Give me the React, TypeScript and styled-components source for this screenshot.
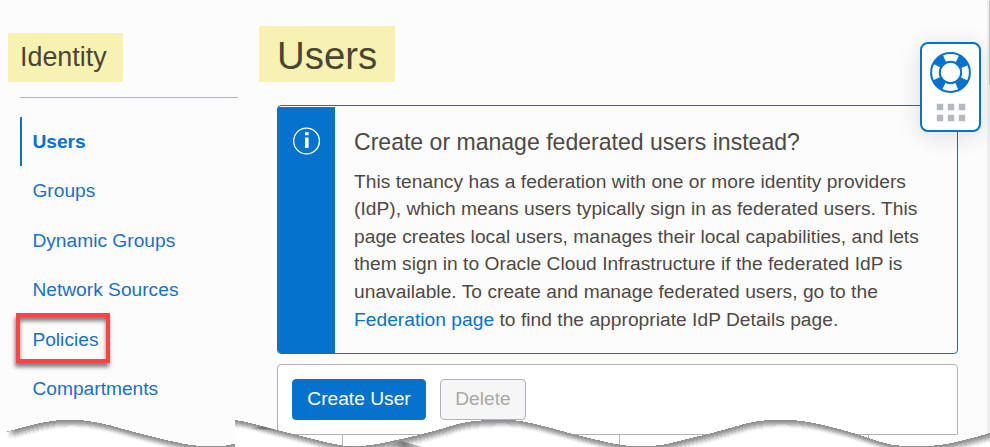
import React from "react";
import styled, { createGlobalStyle, css } from "styled-components";

const BLUE = "#0572ce";
const TEXT = "#4e4944";
const LINE = "#aeb4bb";
const HIGHLIGHT = "#f7f1b2";

const GlobalStyle = createGlobalStyle`
  *, *::before, *::after { box-sizing: border-box; }
  body { margin: 0; background: #fff; overflow: hidden; }
`;

const Page = styled.div`
  position: relative;
  display: grid;
  grid-template-columns: 238px 720px 1fr 3px;
  width: 990px;
  height: 447px;
  overflow: hidden;
  background: #fcfcfc;
  color: ${TEXT};
  font: 19.2px/27.6px "Liberation Sans", Arial, sans-serif;
`;

const Sidebar = styled.aside`
  padding-top: 33px;
`;

const SidebarTitle = styled.h2`
  margin: 0 0 0 8px;
  width: 115px;
  height: 49px;
  padding-left: 12px;
  background: ${HIGHLIGHT};
  color: #4b4534;
  font-size: 26.88px;
  font-weight: 400;
  line-height: 49px;
`;

const Divider = styled.hr`
  margin: 15px 0 19px 20px;
  height: 1px;
  border: 0;
  background: ${LINE};
`;

const Nav = styled.nav`
  display: flex;
  flex-direction: column;
  margin-left: 20px;
`;

const NavLink = styled.a<{ $active?: boolean; $marked?: boolean }>`
  position: relative;
  height: 49.4px;
  padding-left: ${(p) => (p.$active ? 10.4 : 12.4)}px;
  color: ${(p) => (p.$active ? BLUE : "#1a6fc9")};
  font-weight: ${(p) => (p.$active ? 700 : 400)};
  line-height: 49px;
  text-decoration: none;
  white-space: nowrap;
  ${(p) => p.$active && css`border-left: 2px solid ${BLUE};`}
  ${(p) =>
    p.$marked &&
    css`
      &::after {
        content: "";
        position: absolute;
        left: -4px;
        top: -1.6px;
        width: 94px;
        height: 50px;
        border: 4px solid #fe4343;
        box-shadow: -1px 4px 4px rgba(0, 0, 0, 0.5), inset 0 4px 4px rgba(0, 0, 0, 0.5);
      }
    `}
`;

const Main = styled.main`
  display: flex;
  flex-direction: column;
  padding: 26px 0 0 21px;
`;

const Title = styled.h1`
  margin: 0 0 23px;
  width: 136px;
  height: 56px;
  padding-left: 18px;
  background: ${HIGHLIGHT};
  color: #4b4534;
  font-size: 38.4px;
  font-weight: 400;
  line-height: 60px;
`;

const Notice = styled.section`
  display: flex;
  flex: none;
  height: 249px;
  margin: 0 0 10px 18px;
  padding-top: 1px;
  border: 1px solid ${BLUE};
  border-radius: 4px;
  overflow: hidden;
`;

const NoticeStrip = styled.div`
  flex: none;
  width: 57px;
  padding: 20px 0 0 15px;
  background: ${BLUE};
`;

const NoticeBody = styled.div`
  padding: 21px 0 0 19px;
  width: 600px;
`;

const NoticeTitle = styled.h3`
  margin: 0 0 11.6px;
  font-size: 23.06px;
  font-weight: 400;
  line-height: 28px;
`;

const NoticeText = styled.p`
  margin: 0;
  letter-spacing: 0.025px;
  white-space: nowrap;
`;

const TextLink = styled.a`
  color: ${BLUE};
  text-decoration: none;
`;

const Toolbar = styled.div`
  display: flex;
  flex: none;
  gap: 14px;
  height: 71px;
  margin-left: 18px;
  padding: 14px;
  border: 1px solid ${LINE};
  border-radius: 4px 4px 0 0;
  background: #fff;
`;

const Button = styled.button<{ $primary?: boolean }>`
  width: ${(p) => (p.$primary ? 134 : 86)}px;
  height: 41px;
  padding: 0 0 2px;
  border: 1px solid ${(p) => (p.$primary ? BLUE : LINE)};
  border-radius: 4px;
  background: ${(p) => (p.$primary ? BLUE : "#f6f6f6")};
  color: ${(p) => (p.$primary ? "#fff" : "#aaa9a8")};
  font: inherit;
  white-space: nowrap;
`;

const TableHead = styled.div`
  display: grid;
  grid-template-columns: 66px 277px 249px 1fr;
  height: 12px;
  margin-left: 18px;
  background: #fff;
`;

const HeadCell = styled.div<{ $last?: boolean }>`
  border-right: ${(p) => (p.$last ? 0 : 1)}px solid ${LINE};
`;

const ScrollTrack = styled.div`
  grid-column: 4;
  padding: 1px 0 0 2px;
  background: #efefef;
`;

const ScrollThumb = styled.div`
  height: 84px;
  background: #c1c1c1;
`;

const HelpWidget = styled.div`
  position: absolute;
  left: 920px;
  top: 42px;
  width: 61px;
  height: 90px;
  display: flex;
  flex-direction: column;
  align-items: center;
  padding-top: 8px;
  border: 2px solid ${BLUE};
  border-radius: 8px;
  background: #fff;
  box-shadow: 0 4px 24px rgba(0, 0, 0, 0.13);
`;

const Grip = styled.div`
  display: grid;
  grid-template-columns: repeat(3, 6px);
  grid-auto-rows: 6px;
  gap: 5.5px 5px;
  margin-top: 10.5px;
`;

const GripDot = styled.i`
  background: #b3b9bf;
  box-shadow: 0 0 0 0.5px #dfe2e5;
`;

const TornEdge = styled.svg`
  position: absolute;
  left: 0;
  top: 0;
  pointer-events: none;
`;

type Point = [number, number];

const leftEdge: Point[] = [
  [-20, 432], [6, 432], [20, 428], [35, 424], [53, 420.5], [70, 419.5], [86, 420.5], [100, 423], [113, 426],
  [130, 431], [150, 436], [170, 441], [192, 445.5], [208, 446], [226, 446], [240, 442],
];

const rightEdge: Point[] = [
  [215, 419], [225, 419], [235, 420], [245, 421.5], [265, 427], [285, 432], [305, 437], [325, 442], [343, 446], [365, 446],
  [380, 443.5], [397, 440], [415, 436], [430, 432], [445, 428], [457, 424], [470, 421.5], [483, 420.2],
  [500, 419.5], [518, 420.2], [540, 425], [556, 429.5], [573, 434], [597, 440], [620, 445], [632, 446],
  [655, 446], [670, 443.5], [687, 439], [708, 434], [727, 429], [747, 423], [763, 420.3], [780, 419.5],
  [797, 420.3], [812, 422.5], [827, 426], [843, 430], [860, 435], [885, 443.5], [900, 446], [930, 446],
  [945, 444.5], [960, 441], [976, 437], [992, 432.5],
];

// Closed region below a smoothed edge.
const regionBelow = (pts: Point[]) => {
  let d = `M${pts[0][0]} 470L${pts[0][0]} ${pts[0][1]}`;
  for (let i = 1; i < pts.length - 1; i++) {
    const mx = (pts[i][0] + pts[i + 1][0]) / 2;
    const my = (pts[i][1] + pts[i + 1][1]) / 2;
    d += `Q${pts[i][0]} ${pts[i][1]} ${mx} ${my}`;
  }
  const end = pts[pts.length - 1];
  return `${d}L${end[0]} ${end[1]}L${end[0] + 20} ${end[1]}V470Z`;
};

const shades = ["#8f8f8f", "#979797", "#a2a2a2", "#b0b0b0", "#c0c0c0", "#d0d0d0", "#e0e0e0", "#eeeeee", "#f8f8f8", "#ffffff"];

const Tear = ({ pts, clip }: { pts: Point[]; clip: string }) => {
  const d = regionBelow(pts);
  return (
    <g clipPath={`url(#${clip})`} shapeRendering="crispEdges">
      {shades.map((fill, i) => (
        <path key={fill} d={d} fill={fill} transform={`translate(${i * 0.35} ${i * 0.95})`} />
      ))}
    </g>
  );
};

const Lifebuoy = () => (
  <svg width="41" height="41" viewBox="0 0 41 41" fill="none">
    <circle cx="20.5" cy="20.5" r="15" stroke={BLUE} strokeWidth="9" strokeDasharray="10.4 13.162" strokeDashoffset="-6.58" />
    <circle cx="20.5" cy="20.5" r="19.4" stroke={BLUE} strokeWidth="2" />
    <circle cx="20.5" cy="20.5" r="10.7" stroke={BLUE} strokeWidth="2" />
  </svg>
);

const InfoIcon = () => (
  <svg width="28" height="29" viewBox="0 0 28 29" fill="none">
    <circle cx="13.5" cy="14" r="12.9" stroke="#fff" strokeWidth="1.4" />
    <path d="M12 5.200h3.600v3H12zM12 10.500h3.600V21H12z" fill="#fff" />
  </svg>
);

const links = ["Users", "Groups", "Dynamic Groups", "Network Sources", "Policies", "Compartments"];

export default function App() {
  return (
    <>
      <GlobalStyle />
      <Page>
        <Sidebar>
          <SidebarTitle>Identity</SidebarTitle>
          <Divider />
          <Nav>
            {links.map((name) => (
              <NavLink key={name} $active={name === "Users"} $marked={name === "Policies"}>
                {name}
              </NavLink>
            ))}
          </Nav>
        </Sidebar>
        <Main>
          <Title>Users</Title>
          <Notice>
            <NoticeStrip>
              <InfoIcon />
            </NoticeStrip>
            <NoticeBody>
              <NoticeTitle>Create or manage federated users instead?</NoticeTitle>
              <NoticeText>
                This tenancy has a federation with one or more identity providers
                <br />
                (IdP), which means users typically sign in as federated users. This
                <br />
                page creates local users, manages their local capabilities, and lets
                <br />
                them sign in to Oracle Cloud Infrastructure if the federated IdP is
                <br />
                unavailable. To create and manage federated users, go to the
                <br />
                <TextLink>Federation page</TextLink> to find the appropriate IdP Details page.
              </NoticeText>
            </NoticeBody>
          </Notice>
          <Toolbar>
            <Button $primary>Create User</Button>
            <Button disabled>Delete</Button>
          </Toolbar>
          <TableHead>
            <HeadCell />
            <HeadCell />
            <HeadCell />
            <HeadCell $last />
          </TableHead>
        </Main>
        <ScrollTrack>
          <ScrollThumb />
        </ScrollTrack>
        <HelpWidget>
          <Lifebuoy />
          <Grip>
            {Array.from({ length: 6 }, (_, i) => (
              <GripDot key={i} />
            ))}
          </Grip>
        </HelpWidget>
        <TornEdge width="990" height="447" viewBox="0 0 990 447">
          <defs>
            <clipPath id="tear-left"><rect x="7" y="400" width="228" height="47" /></clipPath>
            <clipPath id="tear-right"><rect x="235" y="400" width="755" height="47" /></clipPath>
            <linearGradient id="tear-fade">
              <stop offset="0" stopColor="#fff" />
              <stop offset="1" stopColor="#fff" stopOpacity="0" />
            </linearGradient>
            <linearGradient id="tear-fold">
              <stop offset="0" stopColor="#777" stopOpacity="0" />
              <stop offset="0.5" stopColor="#686868" stopOpacity="0.8" />
              <stop offset="1" stopColor="#777" stopOpacity="0.3" />
            </linearGradient>
          </defs>
          <rect x="0" y="433" width="8" height="14" fill="#fff" />
          <Tear pts={leftEdge} clip="tear-left" />
          <path d="M7 432L15 429.500V447H7Z" fill="url(#tear-fade)" />
          <Tear pts={rightEdge} clip="tear-right" />
          <path d="M249 429L262 426L278 430Z" fill="url(#tear-fold)" />
          <path d="M386 447L401 441L423 447Z" fill="url(#tear-fold)" />
        </TornEdge>
      </Page>
    </>
  );
}
